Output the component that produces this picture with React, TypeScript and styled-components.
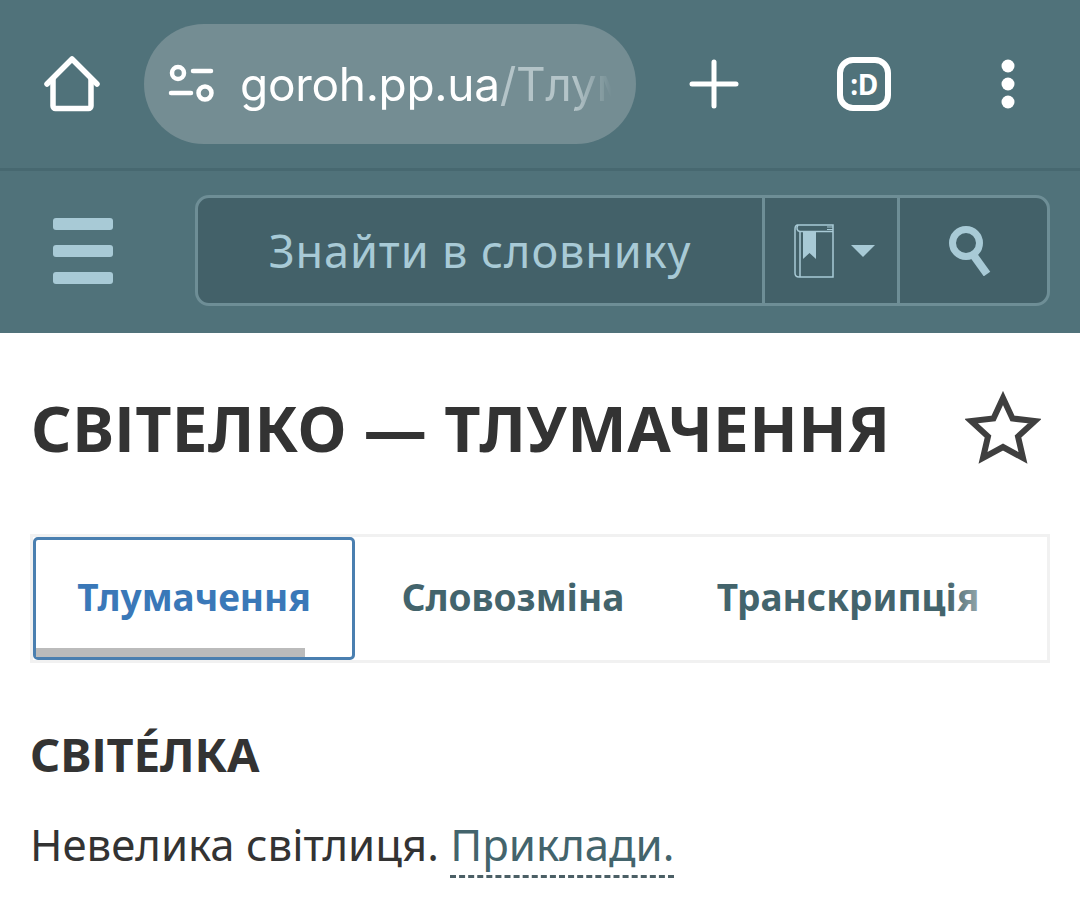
import React from 'react'
import styled, { createGlobalStyle } from 'styled-components'

const GlobalStyle = createGlobalStyle`
  html, body {
    margin: 0;
    padding: 0;
    background: #ffffff;
    overflow: hidden;
  }
  body {
    font-family: "Noto Sans", "Open Sans", sans-serif;
    color: #333333;
  }
`

const Page = styled.div`
  width: 1080px;
  height: 907px;
  overflow: hidden;
`

const BrowserBar = styled.div`
  height: 168px;
  display: flex;
  align-items: center;
  background: #50727a;
`

const IconSlot = styled.div<{ $w: number }>`
  width: ${(p) => p.$w}px;
  flex: none;
  display: flex;
  align-items: center;
  justify-content: center;
  color: #ffffff;
`

const UrlPill = styled.div`
  width: 492px;
  height: 120px;
  flex: none;
  box-sizing: border-box;
  padding: 0 24px 0 24px;
  border-radius: 60px;
  background: #748d93;
  display: flex;
  align-items: center;
  gap: 24px;
  color: #ffffff;
`

const UrlText = styled.div`
  flex: 1;
  min-width: 0;
  overflow: hidden;
  white-space: nowrap;
  font-family: Inter, "Noto Sans", sans-serif;
  font-size: 46px;
  letter-spacing: -0.3px;
  -webkit-mask-image: linear-gradient(to right, #000 90%, transparent 100%);
  mask-image: linear-gradient(to right, #000 90%, transparent 100%);
`

const UrlPath = styled.span`
  color: #b4c4c8;
`

const EmojiBadge = styled.div`
  width: 54px;
  height: 54px;
  box-sizing: border-box;
  border: 6px solid #ffffff;
  border-radius: 16px;
  display: flex;
  align-items: center;
  justify-content: center;
  font-family: "Noto Sans", sans-serif;
  font-size: 28px;
  font-weight: 700;
  letter-spacing: -0.5px;
  color: #ffffff;
`

const BarLine = styled.div`
  height: 3px;
  background: #476870;
`

const SiteHeader = styled.header`
  height: 162px;
  box-sizing: border-box;
  padding: 24px 30px 27px 53px;
  display: flex;
  align-items: stretch;
  gap: 82px;
  background: #50727a;
`

const Burger = styled.div`
  width: 60px;
  flex: none;
  padding-top: 1px;
  display: flex;
  flex-direction: column;
  justify-content: center;
  gap: 15px;
`

const BurgerBar = styled.span`
  display: block;
  height: 12px;
  border-radius: 3px;
  background: #a8cad6;
`

const SearchBox = styled.div`
  flex: 1;
  display: flex;
  box-sizing: border-box;
  border: 3px solid #6e8e96;
  border-radius: 14px;
  background: #436169;
  overflow: hidden;
`

const SearchLabel = styled.div`
  width: 564px;
  flex: none;
  display: flex;
  align-items: center;
  justify-content: center;
  font-size: 45px;
  letter-spacing: 0.9px;
  color: #a8cad6;
`

const SearchCell = styled.div<{ $w: number; $pl?: number; $pr?: number }>`
  width: ${(p) => p.$w}px;
  flex: none;
  box-sizing: border-box;
  padding: 0 ${(p) => p.$pr ?? 0}px 0 ${(p) => p.$pl ?? 0}px;
  border-left: 3px solid #6e8e96;
  display: flex;
  align-items: center;
  justify-content: center;
  gap: 17px;
`

const Caret = styled.span`
  width: 0;
  height: 0;
  border-left: 12px solid transparent;
  border-right: 12px solid transparent;
  border-top: 12px solid #a8cad6;
`

const Content = styled.main`
  padding: 0 30px 0 31px;
`

const TitleRow = styled.div`
  height: 201px;
  box-sizing: border-box;
  padding: 0 9px 12px 0;
  display: flex;
  align-items: center;
  justify-content: space-between;
`

const Title = styled.h1`
  margin: 0;
  font-size: 63px;
  font-weight: 700;
  line-height: 1;
  letter-spacing: 0.5px;
  white-space: nowrap;
  color: #333333;
`

const Tabs = styled.div`
  position: relative;
  height: 129px;
  margin-left: -1px;
  box-sizing: border-box;
  border: 3px solid #f1f1f1;
  display: flex;
  overflow: hidden;
  &::after {
    content: '';
    position: absolute;
    top: 0;
    right: 0;
    bottom: 0;
    width: 100px;
    background: linear-gradient(to right, rgba(255, 255, 255, 0), #ffffff 75%);
  }
`

const Tab = styled.div<{ $active?: boolean; $w: number }>`
  position: relative;
  width: ${(p) => p.$w}px;
  flex: none;
  box-sizing: border-box;
  padding-bottom: 4px;
  display: flex;
  align-items: center;
  justify-content: center;
  white-space: nowrap;
  font-size: 37px;
  font-weight: 700;
  color: ${(p) => (p.$active ? '#3a78b8' : '#43646c')};
  border: 3px solid ${(p) => (p.$active ? '#4a7fb0' : 'transparent')};
  border-radius: 5px;
`

const ScrollThumb = styled.div`
  position: absolute;
  left: 0;
  bottom: 0;
  width: 269px;
  height: 9px;
  background: #bbbbbb;
`

const WordTitle = styled.h2`
  margin: 61px 0 0 -1px;
  font-size: 47px;
  font-weight: 700;
  line-height: 60px;
  color: #333333;
`

const Definition = styled.p`
  margin: 30px 0 0 -1px;
  font-size: 43.7px;
  line-height: 60px;
  color: #333333;
`

const ExampleLink = styled.span`
  display: inline-block;
  padding-bottom: 1px;
  color: #43646c;
  border-bottom: 3px dashed #4b5f65;
`

const App: React.FC = () => {
  return (
    <Page>
      <GlobalStyle />
      <BrowserBar>
        <IconSlot $w={144}>
          <svg width="56" height="56" viewBox="0 0 56 56" fill="none" stroke="currentColor" strokeWidth="5.5" strokeLinecap="round" strokeLinejoin="round">
            <path d="M3 28 L28 3 L53 28" />
            <path d="M9 23 V50 a2.5 2.5 0 0 0 2.5 2.5 H44.5 a2.5 2.5 0 0 0 2.5 -2.5 V23" />
          </svg>
        </IconSlot>
        <UrlPill>
          <svg width="48" height="40" viewBox="0 0 48 40" fill="none" stroke="currentColor" strokeWidth="4.5" strokeLinecap="round" style={{ flex: 'none' }}>
            <circle cx="10" cy="9" r="6" />
            <path d="M25 7 H43" />
            <path d="M3 29 H23" />
            <circle cx="37" cy="29" r="6.5" />
          </svg>
          <UrlText>
            goroh.pp.ua<UrlPath>/Тлумачення</UrlPath>
          </UrlText>
        </UrlPill>
        <IconSlot $w={156}>
          <svg width="52" height="52" viewBox="0 0 52 52" stroke="currentColor" strokeWidth="5" strokeLinecap="round">
            <path d="M26 4 V48" />
            <path d="M4 26 H48" />
          </svg>
        </IconSlot>
        <IconSlot $w={144}>
          <EmojiBadge>:D</EmojiBadge>
        </IconSlot>
        <IconSlot $w={144}>
          <svg width="14" height="52" viewBox="0 0 14 52" fill="currentColor">
            <circle cx="7" cy="8" r="6.5" />
            <circle cx="7" cy="26" r="6.5" />
            <circle cx="7" cy="44" r="6.5" />
          </svg>
        </IconSlot>
      </BrowserBar>
      <BarLine />
      <SiteHeader>
        <Burger>
          <BurgerBar />
          <BurgerBar />
          <BurgerBar />
        </Burger>
        <SearchBox>
          <SearchLabel>Знайти в словнику</SearchLabel>
          <SearchCell $w={135} $pl={6}>
            <svg width="40" height="54" viewBox="0 0 40 54" fill="none" stroke="#a8cad6" strokeWidth="1.5">
              <path d="M4 1 H39 V53 H5 C2 53 1 51 1 49 V5 C1 3 2 1 4 1 Z" />
              <path d="M4 1 C2 4 3 7 6 7.5 H39" />
              <path d="M6 7.5 V53" />
              <path d="M33 3 H39 M33 5.5 H39" strokeWidth="1" />
              <path d="M9 7 H22 V35 L15.5 29 L9 35 Z" fill="#a8cad6" stroke="none" />
            </svg>
            <Caret />
          </SearchCell>
          <SearchCell $w={151} $pr={8}>
            <svg width="42" height="50" viewBox="0 0 42 50" fill="none" stroke="#a8cad6" strokeWidth="7">
              <circle cx="17" cy="17" r="13.5" />
              <path d="M25 30 L38 48" strokeWidth="8" />
            </svg>
          </SearchCell>
        </SearchBox>
      </SiteHeader>
      <Content>
        <TitleRow>
          <Title>СВІТЕЛКО — ТЛУМАЧЕННЯ</Title>
          <svg width="76" height="74" viewBox="0 0 76 74" fill="none" stroke="#3f3f3f" strokeWidth="6" strokeLinejoin="miter">
            <path d="M38 7 L47.5 27.5 L70 30 L53 45.5 L58 67 L38 56 L18 67 L23 45.5 L6 30 L28.5 27.5 Z" />
          </svg>
        </TitleRow>
        <Tabs>
          <Tab $active $w={322}>
            Тлумачення
            <ScrollThumb />
          </Tab>
          <Tab $w={316}>Словозміна</Tab>
          <Tab $w={354}>Транскрипція</Tab>
        </Tabs>
        <WordTitle>СВІТЕ́ЛКА</WordTitle>
        <Definition>
          Невелика світлиця. <ExampleLink>Приклади.</ExampleLink>
        </Definition>
      </Content>
    </Page>
  )
}

export default App
